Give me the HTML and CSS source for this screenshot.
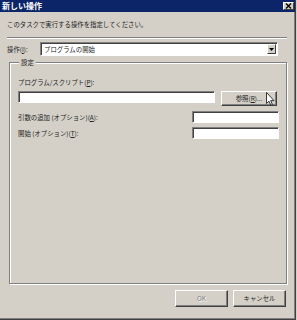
FILE: index.html
```html
<!DOCTYPE html>
<html lang="ja">
<head>
<meta charset="utf-8">
<title>新しい操作</title>
<link rel="stylesheet" href="styles.css">
</head>
<body>
<div class="window">
  <div class="titlebar">
    <span class="title">新しい操作</span>
    <span class="close"><svg width="7" height="6" viewBox="0 0 7 6"><path d="M1 0.5 L6 5.5 M6 0.5 L1 5.5" stroke="#000" stroke-width="1.3"/></svg></span>
  </div>
  <div class="content">
    <div class="desc">このタスクで実行する操作を指定してください。</div>
    <div class="sep"></div>
    <div class="action-row">
      <span class="action-label">操作(<u>I</u>):</span>
      <div class="select">
        <span class="select-text">プログラムの開始</span>
        <span class="select-btn"><svg width="5" height="3" viewBox="0 0 5 3"><path d="M0 0 H5 L2.5 3 Z" fill="#000"/></svg></span>
      </div>
    </div>
    <fieldset class="group">
      <legend class="group-title">設定</legend>
      <div class="field-label">プログラム/スクリプト(<u>P</u>):</div>
      <div class="program-row">
        <div class="input input-program"></div>
        <div class="button browse">参照(<u>R</u>)...</div>
        <svg class="cursor" width="9" height="14" viewBox="0 0 9 14"><path d="M0.5 0.5 V11.5 L3 9.2 L4.8 13.2 L6.4 12.5 L4.7 8.6 H8 Z" fill="#fff" stroke="#222" stroke-width="0.9" stroke-linejoin="round"/></svg>
      </div>
      <div class="opt-row opt-first">
        <span class="opt-label">引数の追加 (オプション)(<u>A</u>):</span>
        <div class="input input-opt"></div>
      </div>
      <div class="opt-row opt-second">
        <span class="opt-label">開始 (オプション)(<u>T</u>):</span>
        <div class="input input-opt"></div>
      </div>
    </fieldset>
    <div class="footer">
      <div class="button btn-footer disabled">OK</div>
      <div class="button btn-footer">キャンセル</div>
    </div>
  </div>
</div>
</body>
</html>
```
FILE: styles.css
```css
html, body {
  margin: 0;
  padding: 0;
  background: #d4d0c8;
}
body {
  font-family: "Noto Sans CJK JP", "Noto Sans", sans-serif;
  font-size: 6.4px;
  line-height: 9px;
  color: #222;
}
u { text-decoration: underline; text-underline-offset: 1px; }

.window {
  width: 296px;
  height: 320px;
  box-sizing: border-box;
  background: #d4d0c8;
  border-right: 1px solid #404040;
  border-bottom: 1px solid #404040;
  box-shadow: inset -1px -1px #808080;
  display: flex;
  flex-direction: column;
}

.titlebar {
  height: 12px;
  background: #0c2568;
  display: flex;
  align-items: center;
  justify-content: space-between;
  padding: 0 1px 0 2px;
}
.title {
  color: #fff;
  font-weight: bold;
  font-size: 8px;
  line-height: 12px;
}
.close {
  width: 11px;
  height: 8px;
  box-sizing: border-box;
  background: #d4d0c8;
  border: 1px solid;
  border-color: #fff #404040 #404040 #fff;
  display: flex;
  align-items: center;
  justify-content: center;
}

.content {
  flex: 1;
  display: flex;
  flex-direction: column;
  padding: 0 8px 0 7px;
}

.desc {
  margin-top: 8px;
}

.sep {
  margin-top: 8px;
  border-top: 1px solid #808080;
  border-bottom: 1px solid #fff;
}

.action-row {
  margin-top: 3px;
  height: 14px;
  display: flex;
  align-items: center;
  margin-right: 9px;
}
.action-label {
  width: 33px;
}
.select {
  flex: 1;
  height: 14px;
  box-sizing: border-box;
  background: #fff;
  border: 1px solid;
  border-color: #808080 #fff #fff #808080;
  box-shadow: inset 1px 1px #404040;
  display: flex;
  align-items: center;
  justify-content: space-between;
  padding: 1px 1px 1px 3px;
}
.select-btn {
  width: 9px;
  height: 10px;
  box-sizing: border-box;
  background: #d4d0c8;
  border: 1px solid;
  border-color: #fff #404040 #404040 #fff;
  display: flex;
  align-items: center;
  justify-content: center;
}

.group {
  flex: 1;
  margin: 2px 0 0 2px;
  padding: 0 7px 0 8px;
  border: 1px solid #808080;
  box-shadow: inset 1px 1px #fff, 1px 1px #fff;
  min-width: 0;
}
.group-title {
  padding: 0 2px;
  margin-left: 1px;
  background: #d4d0c8;
}

.field-label {
  margin-top: 11px;
}

.program-row {
  position: relative;
  display: flex;
  align-items: flex-start;
  gap: 6px;
  margin-top: 4px;
}
.input {
  box-sizing: border-box;
  background: #fff;
  border: 1px solid;
  border-color: #808080 #fff #fff #808080;
  box-shadow: inset 1px 1px #404040;
}
.input-program {
  width: 197px;
  height: 12px;
}

.button {
  box-sizing: border-box;
  background: #d4d0c8;
  border: 1px solid;
  border-color: #fff #404040 #404040 #fff;
  box-shadow: inset -1px -1px #808080;
  display: flex;
  align-items: center;
  justify-content: center;
}
.browse {
  width: 56px;
  height: 15px;
}
.cursor {
  position: absolute;
  left: 248px;
  top: 1px;
}

.opt-row {
  display: flex;
  align-items: center;
  justify-content: space-between;
}
.opt-first { margin-top: 5px; }
.opt-second { margin-top: 4px; }
.input-opt {
  width: 87px;
  height: 12px;
}

.footer {
  display: flex;
  justify-content: flex-end;
  gap: 5px;
  margin-top: 6px;
  padding: 0 1px 12px 0;
}
.btn-footer {
  width: 53px;
  height: 17px;
}
.disabled {
  color: #808080;
  text-shadow: 1px 1px #fff;
}
```
